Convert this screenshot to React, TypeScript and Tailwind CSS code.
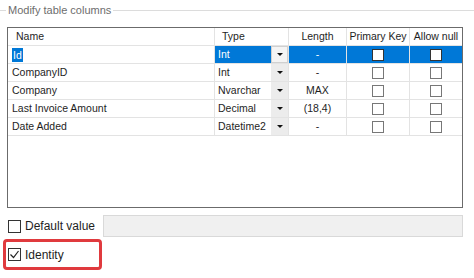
import React from 'react';

type Row = { name: string; type: string; length: string };

const rows: Row[] = [
  { name: 'Id', type: 'Int', length: '-' },
  { name: 'CompanyID', type: 'Int', length: '-' },
  { name: 'Company', type: 'Nvarchar', length: 'MAX' },
  { name: 'Last Invoice Amount', type: 'Decimal', length: '(18,4)' },
  { name: 'Date Added', type: 'Datetime2', length: '-' },
];

const cols = 'grid grid-cols-[207px_56px_18px_58px_63px_52px]';

const Arrow = () => (
  <svg width="6" height="3" viewBox="0 0 6 3">
    <path d="M0 0h6L3 3z" fill="#111" />
  </svg>
);

const Box = ({ selected }: { selected?: boolean }) => (
  <div
    className={
      'w-[12px] h-[12px] border bg-white ' +
      (selected ? 'border-[#333]' : 'border-[#777]')
    }
  />
);

const App = () => {
  return (
    <div className="w-[474px] h-[278px] bg-white overflow-hidden text-[10.5px] text-[#1e1e1e] font-['Liberation_Sans',Arial,sans-serif] whitespace-nowrap">
      {/* group box caption */}
      <div className="flex items-center h-[20px]">
        <div className="w-[6px] h-px bg-[#dcdcdc]" />
        <span className="px-[2px] text-[#6d6d6d] leading-none text-[11px]">Modify table columns</span>
        <div className="flex-1 h-px bg-[#dcdcdc]" />
      </div>

      {/* grid */}
      <div className="ml-[7px] mt-[7px] w-[456px] h-[181px] border border-[#6b6b6b] bg-white">
        <div className={cols + ' h-[18px] border-b border-[#e3e3e3]'}>
          <div className="pl-[8px] flex items-center border-r border-[#e3e3e3]">Name</div>
          <div className="col-span-2 pl-[7px] flex items-center border-r border-[#e3e3e3]">Type</div>
          <div className="flex items-center justify-center border-r border-[#e3e3e3]">Length</div>
          <div className="flex items-center justify-center border-r border-[#e3e3e3]">Primary Key</div>
          <div className="flex items-center justify-center">Allow null</div>
        </div>
        {rows.map((r, i) => {
          const sel = i === 0;
          return (
            <div key={r.name} className={cols + ' h-[18px] border-b border-[#e3e3e3]'}>
              <div className="pl-[4px] flex items-center border-r border-[#e3e3e3]">
                {sel ? (
                  <span className="bg-[#0078d7] text-white px-[1px] leading-[14px]">{r.name}</span>
                ) : (
                  <span>{r.name}</span>
                )}
              </div>
              <div
                className={
                  'pl-[3px] flex items-center ' + (sel ? 'bg-[#0078d7] text-white' : '')
                }
              >
                {r.type}
              </div>
              <div
                className={
                  'flex items-center justify-center border-r border-[#e3e3e3] ' +
                  (sel ? 'bg-[#0078d7]' : '')
                }
              >
                <div
                  className={
                    'w-[17px] h-[17px] flex items-center justify-center ' +
                    (sel ? 'bg-[#f4f4f4] border border-[#d0d0d0]' : 'bg-[#ececec]')
                  }
                >
                  <Arrow />
                </div>
              </div>
              <div
                className={
                  'flex items-center justify-center border-r border-[#e3e3e3] ' +
                  (sel ? 'bg-[#0078d7] text-white' : '')
                }
              >
                {r.length}
              </div>
              <div
                className={
                  'flex items-center justify-center border-r border-[#e3e3e3] ' +
                  (sel ? 'bg-[#0078d7]' : '')
                }
              >
                <Box selected={sel} />
              </div>
              <div className={'flex items-center justify-center ' + (sel ? 'bg-[#0078d7]' : '')}>
                <Box selected={sel} />
              </div>
            </div>
          );
        })}
      </div>

      {/* default value */}
      <div className="flex items-center mt-[7px] h-[22px]">
        <div className="ml-[8px] w-[13px] h-[13px] border border-[#333] bg-white" />
        <span className="ml-[4px] text-[12px] leading-none">Default value</span>
        <div className="ml-auto mr-[11px] w-[360px] h-[22px] bg-[#f0f0f0] border border-[#d9d9d9]" />
      </div>

      {/* identity, with red highlight */}
      <div className="ml-[3px] mt-[2px] w-[99px] h-[31px] border-[3px] border-[#e03a3e] rounded-[4px] flex items-center">
        <div className="ml-[2px] w-[13px] h-[13px] border border-[#333] bg-white flex items-center justify-center">
          <svg width="11" height="11" viewBox="0 0 11 11">
            <path d="M1.5 5.5l3 3 5-6.5" fill="none" stroke="#222" strokeWidth="1.2" />
          </svg>
        </div>
        <span className="ml-[4px] text-[12px] leading-none">Identity</span>
      </div>
    </div>
  );
};

export default App;
